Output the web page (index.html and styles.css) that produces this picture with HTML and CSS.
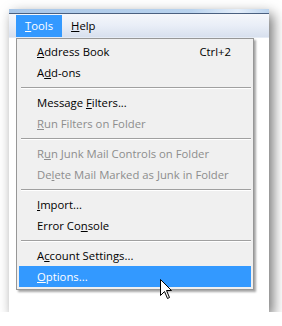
FILE: index.html
```html
<!DOCTYPE html>
<html>
<head>
<meta charset="utf-8">
<link rel="stylesheet" href="styles.css">
</head>
<body>
<div class="window">
  <div class="titlestrip"></div>
  <div class="menubar">
    <span class="mb-item active"><u>T</u>ools</span>
    <span class="mb-item"><u>H</u>elp</span>
  </div>
  <div class="content"></div>
  <div class="menu">
    <div class="item"><span><u>A</u>ddress Book</span><span class="key">Ctrl+2</span></div>
    <div class="item"><span>A<u>d</u>d-ons</span></div>
    <div class="sep"></div>
    <div class="item"><span>Message <u>F</u>ilters...</span></div>
    <div class="item disabled"><span><u>R</u>un Filters on Folder</span></div>
    <div class="sep"></div>
    <div class="item disabled"><span>R<u>u</u>n Junk Mail Controls on Folder</span></div>
    <div class="item disabled"><span>De<u>l</u>ete Mail Marked as Junk in Folder</span></div>
    <div class="sep"></div>
    <div class="item"><span><u>I</u>mport...</span></div>
    <div class="item"><span>Error Co<u>n</u>sole</span></div>
    <div class="sep"></div>
    <div class="item"><span>A<u>c</u>count Settings...</span></div>
    <div class="item hot"><span><u>O</u>ptions...</span></div>
  </div>
  <svg class="cursor" width="13" height="20" viewBox="0 0 13 20">
    <path d="M0.5 0.5 L0.5 16.5 L4.5 12.5 L7.5 19.5 L9.5 18.5 L6.5 11.5 L11.5 11.5 Z" fill="#fff" stroke="#000" stroke-width="1" stroke-linejoin="miter"/>
  </svg>
</div>
</body>
</html>
```
FILE: styles.css
```css
html, body {
  margin: 0;
  padding: 0;
  background: #ffffff;
}
body {
  font-family: "Open Sans", "Noto Sans", sans-serif;
  font-size: 11.3px;
  color: #000;
}
.window {
  position: relative;
  margin: 9px 0 0 9px;
  width: 260px;
  height: 303px;
  background: #ffffff;
  box-shadow: 4px 5px 12px rgba(0, 0, 0, 0.55);
}
.titlestrip {
  height: 4px;
  background: linear-gradient(to right, #a9c7e8 0%, #b9d3ee 70%, #e4eefa 88%, #bcd4ee 100%);
  border-bottom: 1px solid #4a6080;
}
.menubar {
  height: 23px;
  display: flex;
  align-items: stretch;
  padding-left: 7px;
  background: linear-gradient(to bottom, #f5f7fb 0%, #e9eef7 50%, #d8e0ee 100%);
  border-bottom: 1px solid #e6ecf5;
}
.mb-item {
  display: flex;
  align-items: center;
  padding: 0 9px;
  margin-top: 1px;
  line-height: 22px;
}
.mb-item.active {
  background: #3399ff;
  color: #fff;
}
.content {
  flex: 1;
}
.menu {
  position: absolute;
  left: 7px;
  top: 29px;
  width: 232px;
  padding: 2px;
  background: #f0f0f0;
  border: 1px solid #979797;
  box-shadow: 2px 2px 2px rgba(0, 0, 0, 0.35);
}
.item {
  height: 21px;
  display: flex;
  align-items: center;
  justify-content: space-between;
  padding: 0 20px 0 18px;
  white-space: nowrap;
}
.item.disabled {
  color: #8d8d8d;
}
.item.hot {
  background: #3399ff;
  color: #fff;
}
.sep {
  height: 9px;
  display: flex;
  flex-direction: column;
  justify-content: center;
  padding-left: 2px;
}
.sep::before {
  content: "";
  display: block;
  height: 0;
  border-top: 1px solid #a0a0a0;
  border-bottom: 1px solid #ffffff;
}
u {
  text-decoration: underline;
  text-underline-offset: 1px;
}
.cursor {
  position: absolute;
  left: 151px;
  top: 270px;
}
```
